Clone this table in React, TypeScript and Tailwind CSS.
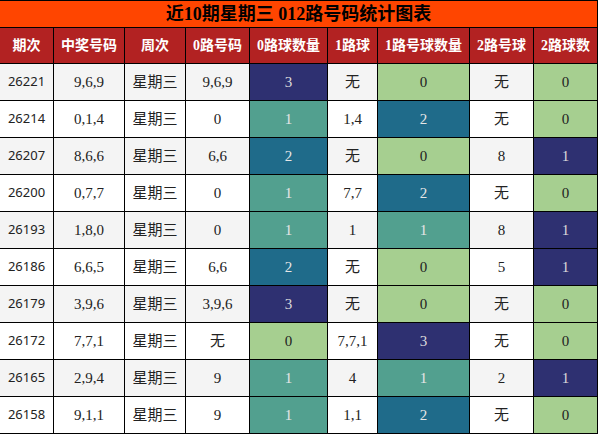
const serif = "font-['Liberation_Serif','Noto_Sans_CJK_SC',serif]";

type Cell = { v: string; c?: 'navy' | 'teal' | 'blue' | 'green' };

const rows: Cell[][] = [
  [{ v: '26221' }, { v: '9,6,9' }, { v: '星期三' }, { v: '9,6,9' }, { v: '3', c: 'navy' }, { v: '无' }, { v: '0', c: 'green' }, { v: '无' }, { v: '0', c: 'green' }],
  [{ v: '26214' }, { v: '0,1,4' }, { v: '星期三' }, { v: '0' }, { v: '1', c: 'teal' }, { v: '1,4' }, { v: '2', c: 'blue' }, { v: '无' }, { v: '0', c: 'green' }],
  [{ v: '26207' }, { v: '8,6,6' }, { v: '星期三' }, { v: '6,6' }, { v: '2', c: 'blue' }, { v: '无' }, { v: '0', c: 'green' }, { v: '8' }, { v: '1', c: 'navy' }],
  [{ v: '26200' }, { v: '0,7,7' }, { v: '星期三' }, { v: '0' }, { v: '1', c: 'teal' }, { v: '7,7' }, { v: '2', c: 'blue' }, { v: '无' }, { v: '0', c: 'green' }],
  [{ v: '26193' }, { v: '1,8,0' }, { v: '星期三' }, { v: '0' }, { v: '1', c: 'teal' }, { v: '1' }, { v: '1', c: 'teal' }, { v: '8' }, { v: '1', c: 'navy' }],
  [{ v: '26186' }, { v: '6,6,5' }, { v: '星期三' }, { v: '6,6' }, { v: '2', c: 'blue' }, { v: '无' }, { v: '0', c: 'green' }, { v: '5' }, { v: '1', c: 'navy' }],
  [{ v: '26179' }, { v: '3,9,6' }, { v: '星期三' }, { v: '3,9,6' }, { v: '3', c: 'navy' }, { v: '无' }, { v: '0', c: 'green' }, { v: '无' }, { v: '0', c: 'green' }],
  [{ v: '26172' }, { v: '7,7,1' }, { v: '星期三' }, { v: '无' }, { v: '0', c: 'green' }, { v: '7,7,1' }, { v: '3', c: 'navy' }, { v: '无' }, { v: '0', c: 'green' }],
  [{ v: '26165' }, { v: '2,9,4' }, { v: '星期三' }, { v: '9' }, { v: '1', c: 'teal' }, { v: '4' }, { v: '1', c: 'teal' }, { v: '2' }, { v: '1', c: 'navy' }],
  [{ v: '26158' }, { v: '9,1,1' }, { v: '星期三' }, { v: '9' }, { v: '1', c: 'teal' }, { v: '1,1' }, { v: '2', c: 'blue' }, { v: '无' }, { v: '0', c: 'green' }],
];

const headers = ['期次', '中奖号码', '周次', '0路号码', '0路球数量', '1路球', '1路号球数量', '2路号球', '2路球数'];

const colorClass = {
  navy: 'bg-[#2e3071] text-[#dcdcdc]',
  teal: 'bg-[#52a08f] text-[#e6e6e6]',
  blue: 'bg-[#1f6b8a] text-[#e6e6e6]',
  green: 'bg-[#a6cf90] text-[#222]',
};

export default function App() {
  return (
    <div className="w-[598px] h-[434px] bg-black pt-px pr-px pb-px grid grid-cols-[53px_70px_60px_63px_77px_49px_91px_63px_63px] grid-rows-[26px_35px_repeat(10,36px)] gap-px">
      <div className={`col-span-9 bg-[#ff4500] flex items-center justify-center text-[18px] font-bold text-black ${serif}`}>
        近10期星期三 012路号码统计图表
      </div>
      {headers.map((h) => (
        <div key={h} className={`bg-[#b22222] text-white font-bold text-[14px] flex items-center justify-center ${serif}`}>
          {h}
        </div>
      ))}
      {rows.map((row, i) =>
        row.map((cell, j) => {
          const base = i % 2 === 0 ? 'bg-[#f4f4f4] text-[#222]' : 'bg-white text-[#222]';
          const bg = cell.c ? colorClass[cell.c] : base;
          const font = j === 0 ? "font-['Noto_Sans','Noto_Sans_CJK_SC',sans-serif] text-[13px]" : `${serif} text-[15px]`;
          return (
            <div key={`${i}-${j}`} className={`${bg} ${font} flex items-center justify-center`}>
              {cell.v}
            </div>
          );
        })
      )}
    </div>
  );
}
